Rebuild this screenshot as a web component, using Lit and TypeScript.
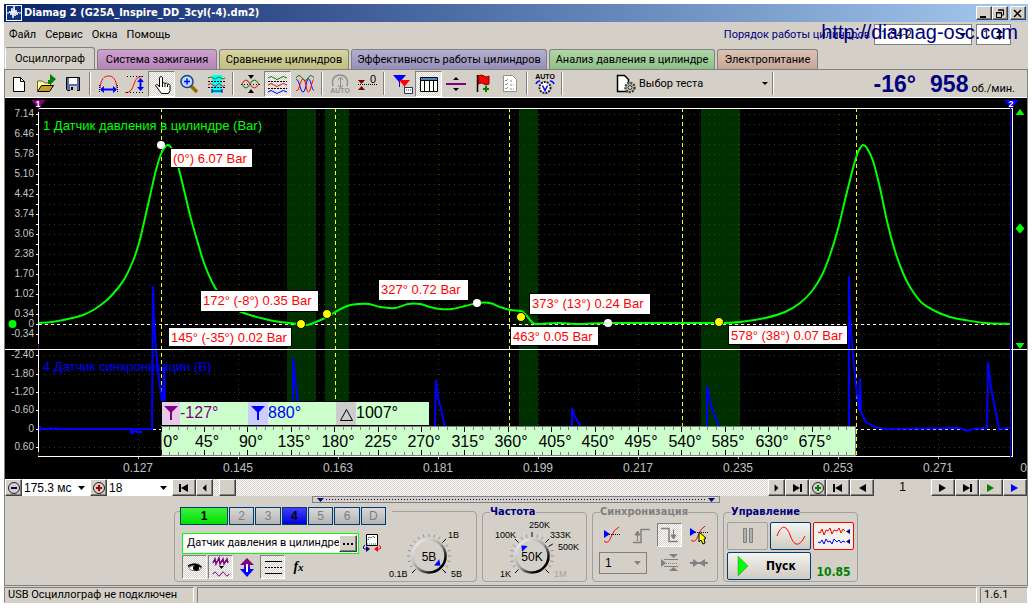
import { LitElement, html, svg, css } from "lit";
import { customElement, property } from "lit/decorators.js";
import { classMap } from "lit/directives/class-map.js";

type Pt = [number, number];

const linePath = (pts: Pt[]) => "M" + pts.map((p) => p.join(",")).join("L");

const smoothPath = (pts: Pt[]) => {
  let d = `M${pts[0][0]},${pts[0][1]}`;
  for (let i = 0; i < pts.length - 1; i++) {
    const a = pts[Math.max(0, i - 1)], b = pts[i], c = pts[i + 1], e = pts[Math.min(pts.length - 1, i + 2)];
    d += `C${b[0] + (c[0] - a[0]) / 6},${b[1] + (c[1] - a[1]) / 6} ${c[0] - (e[0] - b[0]) / 6},${c[1] - (e[1] - b[1]) / 6} ${c[0]},${c[1]}`;
  }
  return d;
};

const range = (n: number) => Array.from({ length: n }, (_, i) => i);

const PRESSURE: Pt[] = [
  [39, 323], [52, 322], [68, 319], [83, 315], [95, 309], [107, 300], [118, 288], [125, 278], [133, 261], [139, 243],
  [145, 218], [150, 196], [156, 170], [161, 154], [165, 147], [168, 145], [172, 149], [178, 166], [184, 190],
  [190, 215], [197, 240], [204, 263], [212, 282], [218, 292], [228, 304], [237, 310], [250, 315], [265, 319],
  [280, 322], [300, 324], [307, 325], [316, 322], [327, 317], [337, 311], [347, 306], [358, 304], [369, 304],
  [380, 307], [395, 308], [408, 304], [420, 304], [430, 307], [440, 309], [452, 309], [465, 306], [478, 303],
  [490, 303], [500, 307], [510, 310], [521, 311], [526, 315], [533, 323], [540, 324], [558, 323], [580, 324],
  [608, 323], [660, 323], [719, 323], [740, 322], [765, 318], [785, 312], [800, 303], [812, 291], [822, 275],
  [830, 255], [838, 229], [845, 200], [849, 184], [853, 168], [858, 152], [861, 147], [863, 145], [867, 148],
  [873, 161], [880, 188], [887, 221], [895, 251], [903, 273], [910, 287], [921, 302], [935, 311], [950, 317],
  [965, 320], [985, 323], [1011, 324],
];

const SYNC: Pt[][] = [
  [[39, 429], [152, 429], [153, 286], [154, 318], [156, 350], [158, 372], [162, 401]],
  [[163, 401], [164, 367], [165, 401]],
  [[293, 401], [293, 358], [295, 380], [298, 401]],
  [[435, 427], [436, 380], [438, 398], [441, 409], [443, 418], [445, 427]],
  [[572, 427], [572, 408], [575, 417], [581, 427]],
  [[707, 427], [707, 386], [711, 406], [715, 417], [719, 427]],
  [[849, 427], [849, 276], [850, 318], [853, 355], [856, 386], [859, 410], [860, 378], [861, 412], [866, 422],
    [875, 427], [885, 429], [960, 428], [967, 431], [973, 429], [987, 428], [988, 362], [991, 388], [995, 408],
    [999, 429], [1010, 428]],
];

const CALLOUTS = [
  { x: 171, y: 149, w: 81, h: 18, text: "(0°) 6.07 Bar" },
  { x: 201, y: 291, w: 117, h: 20, text: "172° (-8°) 0.35 Bar" },
  { x: 169, y: 328, w: 122, h: 18, text: "145° (-35°) 0.02 Bar" },
  { x: 379, y: 280, w: 89, h: 20, text: "327° 0.72 Bar" },
  { x: 530, y: 294, w: 120, h: 20, text: "373° (13°) 0.24 Bar" },
  { x: 511, y: 327, w: 87, h: 18, text: "463° 0.05 Bar" },
  { x: 729, y: 326, w: 118, h: 18, text: "578° (38°) 0.07 Bar" },
];

@customElement("scope-chart")
class ScopeChart extends LitElement {
  static styles = css`
    :host { display: block; background: #000; }
    svg { display: block; width: 100%; height: auto; font-family: "Liberation Sans", Arial, sans-serif; }
    .crisp { shape-rendering: crispEdges; }
    .ylab { font-size: 10px; fill: #c8c8c8; text-anchor: end; }
    .xlab { font-size: 12px; fill: #c0c0c0; text-anchor: middle; }
    .xlab.last { text-anchor: end; }
    .name { font-size: 13px; }
    .callout { font-size: 13px; fill: #f00; }
    .deg { font-size: 16px; }
    .mid { text-anchor: middle; }
    .flag { font-size: 9px; font-weight: bold; fill: #fff; text-anchor: middle; }
    .grid { stroke: #3c3c08; stroke-width: 1; fill: none; }
  `;

  render() {
    const rows = [...range(23).map((i) => 114 + i * 10), 355, 374, 392, 410, 447];
    const upper = ["7.14", "6.46", "5.78", "5.10", "4.42", "3.74", "3.06", "2.38", "1.70", "1.02", "0.34"];
    const yLabels: [number, string][] = [
      ...upper.map((t, i): [number, string] => [114 + i * 20, t]),
      [324, "0"], [334, "-0.34"], [355, "-2.40"], [374, "-1.80"], [392, "-1.20"], [410, "-0.60"], [429, "0"], [447, "0.60"],
    ];
    const xLabels = ["0.127", "0.145", "0.163", "0.181", "0.199", "0.217", "0.235", "0.253", "0.271"];
    const step = 43.4;
    return html`<svg viewBox="5 98 1022 381" role="img" aria-label="Осциллограмма">
      <g class="crisp">
        ${[[287, 29, 401], [325, 24, 401], [519, 19, 427], [701, 39, 427]].map(
          ([x, w, b]) => svg`<rect x=${x} y="109" width=${w} height=${b - 109} fill="#003000"/>`)}
        <g class="grid">
          ${rows.map((y) => svg`<path d="M44 ${y + 0.5}H1010" stroke-dasharray="1 4"/>`)}
          ${range(9).map((i) => svg`<path d="M${138.5 + i * 100} 114V456" stroke-dasharray="1 4"/>`)}
        </g>
        <path d="M39 324.5H1010M39 429.5H1010" stroke="#fff" stroke-dasharray="3 3"/>
        ${[161, 335, 509, 682, 856].map(
          (x) => svg`<path d="M${x + 0.5} 108V456" stroke="#ff0" stroke-dasharray="4 3"/>`)}
      </g>
      <text class="name" x="43" y="130" fill="#0f0">1 Датчик давления в цилиндре (Bar)</text>
      <text class="name" x="43" y="371" fill="#00f">4 Датчик синхронизации (В)</text>
      ${SYNC.map((s) => svg`<path d=${linePath(s)} fill="none" stroke="#00f" stroke-width="2"/>`)}
      <path d="M40 426v5M51 427v3M56 427v3M131 429v4h2v-2h3v1h6" fill="none" stroke="#00f" stroke-width="2"/>
      <path d=${smoothPath(PRESSURE)} fill="none" stroke="#0f0" stroke-width="2"/>
      <g class="crisp">
        <path d="M38 108.5H1012M5 349.5H1027M38 456.5H1012M38.5 108V457M1012.5 108V457" stroke="#fff"/>
        <path d="M1010.5 105V457" stroke="#00f"/>
        <path d="M38.5 106V112M38.5 344V349M38.5 452V456" stroke="#800080"/>
        ${range(23).map((i) => svg`<path d="M36 ${114.5 + i * 10}h2" stroke="#fff"/>`)}
        ${[355, 374, 392, 410, 429, 447].map((y) => svg`<path d="M36 ${y + 0.5}h2" stroke="#fff"/>`)}
        ${range(9).map((i) => svg`<path d="M${138.5 + i * 100} 457v2" stroke="#c0c0c0"/>`)}
      </g>
      ${yLabels.map(([y, t]) => svg`<text class="ylab" x="34" y=${y + 3}>${t}</text>`)}
      ${xLabels.map((t, i) => svg`<text class="xlab" x=${138 + i * 100} y="472">${t}</text>`)}
      <text class="xlab last" x="1027" y="472">0</text>
      <path d="M31 100H46L38.500 108Z" fill="#800080"/>
      <path d="M1004 100H1019L1011.500 108Z" fill="#00f"/>
      <text class="flag" x="38" y="107">1</text>
      <text class="flag" x="1011" y="107">2</text>
      <path d="M1015.500 115h9l-4.500-6zM1020 223.500l4.500 5-4.500 5-4.500-5zM1015.500 343h9l-4.500 6z" fill="#0f0"/>
      ${CALLOUTS.map((c) => svg`<rect class="crisp" x=${c.x - 1} y=${c.y - 1} width=${c.w + 2} height=${c.h + 2}/>
        <rect class="crisp" x=${c.x} y=${c.y} width=${c.w} height=${c.h} fill="#fff"/>
        <text class="callout" x=${c.x + 2} y=${c.y + 14}>${c.text}</text>`)}
      ${([[161, 145], [477, 303], [608, 323]] as Pt[]).map(([x, y]) => svg`<circle cx=${x} cy=${y} r="4" fill="#fff"/>`)}
      ${([[301, 324], [327, 314], [521, 317], [719, 322]] as Pt[]).map(
        ([x, y]) => svg`<circle cx=${x} cy=${y} r="4.500" fill="#ff0" stroke="#000"/>`)}
      <circle cx="12.500" cy="324" r="4" fill="#0f0"/>
      <g class="crisp">
        <rect x="161" y="401" width="269" height="25"/>
        <rect x="162" y="402" width="267" height="23" fill="#cfc"/>
        <rect x="162" y="402" width="18" height="23" fill="#e6cce6"/>
        <rect x="248" y="402" width="20" height="23" fill="#ccf"/>
        <rect x="336" y="402" width="20" height="23" fill="#ccc"/>
        <rect x="161.500" y="426.500" width="694" height="29" fill="#cfc" stroke="#808080"/>
        ${range(80).map((i) => {
          const x = Math.floor(161 + (i * step) / 5) + 0.5;
          const major = i % 5 === 0;
          return svg`<path d=${major ? `M${x} 427v5M${x} 450v5` : `M${x} 427v3M${x} 452v3`} stroke=${major ? "#000" : "#808080"}/>`;
        })}
      </g>
      <path d="M164 406h14l-6 6v8h-2v-8z" fill="#800080"/>
      <path d="M251 406h14l-6 6v8h-2v-8z" fill="#00f"/>
      <path d="M346.500 409.500l6 11h-12z" fill="none" stroke="#000"/>
      <text class="deg" x="180" y="418" fill="#800080">-127°</text>
      <text class="deg" x="268" y="418" fill="#00f">880°</text>
      <text class="deg" x="356" y="418">1007°</text>
      ${range(16).map((i) => svg`<text class="deg mid" x=${i ? Math.round(164 + i * step) : 171} y="447">${i * 45}°</text>`)}
    </svg>`;
  }
}

const ICONS: Record<string, unknown> = {
  new: svg`<path d="M6.500 5.500h7l4 4v10h-11z" fill="#fff" stroke="#000"/><path d="M13.500 5.500v4h4" fill="none" stroke="#000"/>`,
  open: svg`<path d="M3.500 19v-10h5l2 2h6v3" fill="#ffffc0" stroke="#806000"/><path d="M3.500 19.500l4-6h12l-4 6z" fill="#c8a020" stroke="#000"/><path d="M14 12V8h2V2l6 5-5 5" fill="#008000"/>`,
  save: svg`<path d="M5.500 5.500h13v13h-12l-1-1z" fill="#5a6ea8" stroke="#000"/><path d="M8 6h8v6H8z" fill="#fff"/><path d="M9 14h7v5H9z" fill="#c8c8c8"/><path d="M10 15h2v3h-2z" fill="#000"/>`,
  period: svg`<path d="M4 16C5 7 8 4 12.500 4s7.500 3 8.500 12" fill="none" stroke="#f00"/><path d="M3.500 13v8M21.500 13v8" stroke="#000" stroke-dasharray="1 1"/><path d="M5 17.500h15" stroke="#00f" stroke-width="2"/><path d="M8 14v7l-4-3.500zM17 14v7l4-3.500z" fill="#00f"/>`,
  ampl: svg`<path d="M2 20.500C8 21 9 17 11 12S14 4.500 20 4.500" fill="none" stroke="#f00"/><path d="M4 4.500h16M4 20.500h16" stroke="#000" stroke-dasharray="1 2"/><path d="M17.500 8v9" stroke="#00f" stroke-width="2"/><path d="M14 10h7l-3.500-4zM14 15h7l-3.500 4z" fill="#00f"/>`,
  hand: svg`<path d="M9.500 15V5.500q1.500-2 3 0V11q1.500-1 2.500.500 1.500-1 2.500.500 2-.500 2.500 1.500v5l-1.500 3h-7l-6-8q1-2 3 0z" fill="#fff" stroke="#000"/><path d="M15 12v3M17.500 12.500V15M12.500 11v4" stroke="#000"/>`,
  zoom: svg`<path d="M14 14l6 6" stroke="#907000" stroke-width="3.500"/><circle cx="10" cy="9.500" r="6" fill="#b8dcff" stroke="#204080" stroke-width="1.500"/><path d="M10 6.500v6M7 9.500h6" stroke="#00f" stroke-width="1.500"/>`,
  area: svg`<path d="M8 3h10v18H8z" fill="#0ff"/><path d="M4 6q3-2 5 0t4 0 4 0 4 0" fill="none" stroke="#008000"/><path d="M4 9.500h18M4 15.500h18" stroke="#000" stroke-dasharray="2 1"/><path d="M4 13q3-3 5 0t4 0 4 0 4 0" fill="none" stroke="#f00"/><path d="M8 19h10M8 17v4M18 17v4" stroke="#000080"/>`,
  merge: svg`<path d="M3 12q4-8 8 0t9 0" fill="none" stroke="#f00"/><path d="M3 12q4 8 8 0t9 0" fill="none" stroke="#008000"/><path d="M2 12.500h20" stroke="#000" stroke-dasharray="1 2"/><path d="M9 3h6l-3 4zM9 21h6l-3-4z"/>`,
  waves: svg`<path d="M2 6q3-3 6 0t6 0 7 0" fill="none" stroke="#008000"/><path d="M2 13q3-3 6 0t6 0 7 0" fill="none" stroke="#f00"/><path d="M2 20q3-3 6 0t6 0 7 0" fill="none" stroke="#00f"/><path d="M2 9.500h19M2 16.500h19" stroke="#000" stroke-dasharray="2 1"/>`,
  over: svg`<path d="M3 6q3-5 6 0t6 0 6 0" fill="none" stroke="#008000"/><path d="M3 8c3-3 4 12 7 12s3-13 5.500-13S19 20 21 18" fill="none" stroke="#00f"/><path d="M3 18c3 4 4-11 7-11s3 13 5.500 13S19 6 21 8" fill="none" stroke="#f00"/>`,
  auto: svg`<path d="M5 14C3 7 7 3 12 3s9 4 7 11" fill="none" stroke="#909090" stroke-width="1.500"/><path d="M12.500 6v9M10 8l2.500-3L15 8M10 13l2.500 3 2.500-3" fill="none" stroke="#909090"/><text x="12" y="21" font-size="7" font-weight="bold" text-anchor="middle" fill="#909090">AUTO</text>`,
  zero: svg`<path d="M3 8h7l-3.500 4zM3 18h7l-3.500-4z" fill="#800000"/><path d="M3 12.500h19" stroke="#000" stroke-dasharray="1 1"/><text x="15" y="11" font-size="11">0</text>`,
  markers: svg`<path d="M3 3h13l-6 7v5H9v-5z" fill="#00f"/><path d="M9 8h11l-5 6v4h-1v-4z" fill="#f00"/><path d="M14.500 15.500h8v6h-8z" fill="#fff" stroke="#303060"/><path d="M16 18h5" stroke="#303060" stroke-dasharray="1 1"/>`,
  table: svg`<path d="M3.500 5.500h17v14h-17z" fill="#fff" stroke="#000"/><path d="M4 6h16v2H4z" fill="#5080c0"/><path d="M7.500 8v11M12.500 8v11M16.500 8v11M3 8.500h18" stroke="#000"/>`,
  divide: svg`<path d="M2 12h20" stroke="#800080" stroke-width="2"/><path d="M9 8h6l-3-3zM9 16h6l-3 3z"/>`,
  flag: svg`<path d="M7 4q4-2 6 0t5 0v8q-3 2-5 0t-6 0z" fill="#f00" stroke="#800000"/><path d="M6.500 3v17" stroke="#000" stroke-width="1.500"/><path d="M15 14v6M12 17h6" stroke="#008000" stroke-width="2"/>`,
  list: svg`<path d="M5.500 3.500h9l4 4v12h-13z" fill="#fff" stroke="#909090"/><path d="M7 8l1 1 2-2M7 12l1 1 2-2M7 16l1 1 2-2" fill="none" stroke="#909090"/><path d="M12 9h3M12 13h4M12 17h4" stroke="#909090" stroke-dasharray="2 1"/>`,
  autov: svg`<text x="12" y="7" font-size="7" font-weight="bold" text-anchor="middle">AUTO</text><circle cx="12" cy="15.500" r="5.500" fill="#fff" stroke="#202020" stroke-width="2" stroke-dasharray="2 1"/><path d="M9.500 13.500l2.500 5 2.500-5" fill="none" stroke="#00f" stroke-width="1.500"/><path d="M7 9q-3 0-4 3M17 9q3 0 4 3" fill="none" stroke="#00f" stroke-width="1.500"/>`,
  test: svg`<path d="M3.500 3.500h7l4 4v12h-11z" fill="#fff" stroke="#000" stroke-width="1.500"/><circle cx="16" cy="15.500" r="4.500" fill="#d4d0c8" stroke="#404840" stroke-width="2.500" stroke-dasharray="2 1"/><circle cx="16" cy="15.500" r="2" fill="#d4d0c8" stroke="#303830"/>`,
  eye: svg`<path d="M5 11q7-6 14 0v2l-3 3H9q-4-2-4-5z" fill="#807c74"/><path d="M6 13q6-4 12 0-6 5-12 0z" fill="#fff"/><circle cx="13" cy="13" r="3"/><path d="M5 11q7-4 13 1" fill="none" stroke="#000" stroke-width="1.500"/>`,
  squeeze: svg`<path d="M4 8l2-4 1 5 3-6 1 6 3-5 1 5 3-5 1 4" fill="none" stroke="#800080" stroke-width="1.500"/><path d="M10 11h5l-2.500 3z"/><path d="M4 19q2-4 4 0t4 0 4 0 4 0" fill="none" stroke="#800080"/>`,
  updown: svg`<path d="M12 3l7 7h-4v3H9v-3H5z" fill="#800080"/><path d="M12 22l7-8h-4v-2H9v2H5z" fill="#00f"/><path d="M11 9h2v8h-2z" fill="#fff"/>`,
  lines: svg`<path d="M4 6.500h17M4 18.500h17" stroke="#000"/><path d="M4 12.500h17" stroke="#000" stroke-dasharray="2 1"/>`,
  swap: svg`<path d="M6.500 3.500h11v11h-11z" fill="#fff" stroke="#000"/><path d="M7 13h10" stroke="#008000" stroke-dasharray="1 1"/><path d="M8 9l1-3 2 1 2-2 2 2" fill="none" stroke="#000" stroke-dasharray="1 1"/><path d="M5 14q-3 2-1 4h3" fill="none" stroke="#000080"/><path d="M6 15l4 3-4 3z" fill="#000080"/><path d="M19 14q3 2 1 4h-3" fill="none" stroke="#f00"/><path d="M18 15l-4 3 4 3z" fill="#f00"/>`,
  trig: svg`<path d="M4 18q4 4 7-4t8-10" fill="none" stroke="#f00"/><path d="M4 7l6 4-6 4z" fill="#00f"/><path d="M9 11.500h12" stroke="#000" stroke-dasharray="1 1"/>`,
  rise: svg`<path d="M4 19.500h8V6.500h9" fill="none" stroke="#808080" stroke-width="1.500"/><path d="M8.500 18V9M6 12h5l-2.500-4z" fill="#808080" stroke="#808080"/>`,
  fall: svg`<path d="M3 5.500h8v13h9" fill="none" stroke="#808080" stroke-width="1.500"/><path d="M15.500 6v8M13 12h5l-2.500 4z" fill="#808080" stroke="#808080"/>`,
  trigset: svg`<path d="M4 17q4 4 7-4t7-10" fill="none" stroke="#f00"/><path d="M3 5l6 4-6 4z" fill="#00f"/><path d="M8 9.500h13" stroke="#000" stroke-dasharray="1 1"/><path d="M12 9l7 6-2 1 1 4-2 1-2-4-2 2z" fill="#ff0" stroke="#000"/>`,
  level: svg`<path d="M3 8l5 4-5 4zM11 3h9l-4.500 4zM11 20h9l-4.500-4z" fill="#808080"/><path d="M6 8.500h14M6 15.500h14" stroke="#808080"/><path d="M8 12.500h12" stroke="#808080" stroke-dasharray="1 1"/>`,
  center: svg`<path d="M3 12h18" stroke="#808080" stroke-width="2"/><path d="M6 8l6 4-6 4zM18 8l-6 4 6 4z" fill="#808080"/>`,
};

const icon = (name: string) => html`<svg class="ico" viewBox="0 0 24 24" aria-hidden="true">${ICONS[name]}</svg>`;

/* Playback glyphs drawn on a 16 by 10 field */
const arrow = (dir: "l" | "r", bar: boolean, color: string, small = false) => html`<svg class="arr" viewBox="0 0 16 10" aria-hidden="true">
  <path fill=${color} d=${small
    ? (dir === "l" ? "M10 1v8l-4-4z" : "M6 1v8l4-4z")
    : (dir === "l" ? "M12 1v8l-7-4z" : "M4 1v8l7-4z")}/>
  ${bar ? svg`<path fill=${color} d=${dir === "l" ? "M3 1h2v8h-2z" : "M11 1h2v8h-2z"}/>` : ""}
</svg>`;

@customElement("dial-knob")
class DialKnob extends LitElement {
  @property() value = "";
  @property({ attribute: false }) labels: [number, number, string, boolean?][] = [];
  @property({ attribute: false }) marks: number[] = [];
  @property({ type: Number }) pointer = 0;
  @property({ type: Number }) cx = 46;

  static styles = css`
    :host { display: block; }
    svg { display: block; font-family: "Liberation Sans", Arial, sans-serif; font-size: 9px; }
    .val { font-size: 12px; text-anchor: middle; }
    .off { fill: #a0a0a0; }
  `;

  render() {
    const cx = this.cx, cy = 38;
    const at = (deg: number, r: number) => {
      const a = ((deg - 90) * Math.PI) / 180;
      return `${(cx + r * Math.cos(a)).toFixed(1)} ${(cy + r * Math.sin(a)).toFixed(1)}`;
    };
    return html`<svg width="102" height="63" role="img" aria-label=${this.value}>
      <defs><linearGradient id="rim" x1="0" y1="0" x2="1" y2="1">
        <stop offset="0" stop-color="#fff"/><stop offset=".5" stop-color="#a0a0a0"/><stop offset=".8" stop-color="#000"/>
      </linearGradient></defs>
      ${range(19).map((i) => {
        const deg = -135 + i * 15;
        const on = this.marks.includes(deg);
        return svg`<path d="M${at(deg, 19)}L${at(deg, on ? 24 : 22)}" stroke=${on ? "#000" : "#909090"}/>`;
      })}
      <circle cx=${cx} cy=${cy} r="16.500" fill="#d4d0c8" stroke="url(#rim)" stroke-width="2.500"/>
      <path d="M0 -15L4 -10H-4Z" fill="#00f" transform="translate(${cx} ${cy}) rotate(${this.pointer})"/>
      <text class="val" x=${cx} y="43">${this.value}</text>
      ${this.labels.map(([x, y, t, off]) => svg`<text class=${off ? "off" : ""} x=${x} y=${y}>${t}</text>`)}
    </svg>`;
  }
}

@customElement("app-root")
class AppRoot extends LitElement {
  static styles = css`
    :host { display: block; box-sizing: border-box; padding: 4px 4px 5px; background: #fff; color: #000;
      font: 11px/14px Roboto, Tahoma, sans-serif; }
    * { box-sizing: border-box; }
    button, input, select { font: inherit; color: inherit; margin: 0; padding: 0; border: 0; border-radius: 0; }
    .win { background: #d4d0c8; }
    .title { display: flex; align-items: center; height: 18px; padding: 0 2px; gap: 2px; color: #fff;
      font: bold 11px/14px "DejaVu Sans Condensed", Tahoma, sans-serif; background: linear-gradient(90deg, #0a246a, #a6caf0); }
    .title .cap { flex: 1; }
    .logo { width: 16px; height: 16px; display: block; }
    .wbtns { display: flex; }
    .wb, .raised { background: #d4d0c8; border: 1px solid; border-color: #fff #404040 #404040 #fff;
      box-shadow: inset -1px -1px #808080; display: flex; align-items: center; justify-content: center; }
    .wb { width: 16px; height: 14px; }
    .wb.close { margin-left: 2px; }
    .wb svg { display: block; }
    .menu { display: flex; align-items: center; height: 25px; padding: 0 17px 0 5px; position: relative; }
    .menu nav { display: flex; gap: 9px; flex: 1; }
    .menu a { color: #000; text-decoration: none; }
    .order { display: flex; align-items: center; gap: 4px; color: #000080; }
    .order select, .order input { height: 21px; border: 1px solid #808080; background-color: #fff; color: #000; }
    .order select { width: 98px; padding-left: 6px; }
    .order input { width: 35px; padding-left: 6px;
      background: #fff url("data:image/svg+xml,%3Csvg xmlns='http://www.w3.org/2000/svg' width='7' height='11'%3E%3Cpath d='M0 4h7L3.500 0zM0 7h7L3.500 11z'/%3E%3C/svg%3E") no-repeat right 7px center; }
    .menu .site { position: absolute; right: 10px; top: 0; font: 20px/20px "Liberation Sans", Arial, sans-serif; color: #000080;
      white-space: nowrap; }
    select { appearance: none; background: #fff url("data:image/svg+xml,%3Csvg xmlns='http://www.w3.org/2000/svg' width='7' height='4'%3E%3Cpath d='M0 0h7L3.500 4z'/%3E%3C/svg%3E") no-repeat right 5px center; }
    .tabs { display: grid; grid-template-columns: 90px 120px 130px 196px 166px 101px; column-gap: 2px; align-items: end;
      height: 22px; padding-left: 1px; }
    .tab { height: 20px; border: 1px solid #808080; border-bottom: 0; border-radius: 3px 3px 0 0; white-space: nowrap; }
    .tab.on { height: 22px; background: #d4d0c8; border-color: #808080 #808080 #808080 #fff; }
    .tab.c1 { background: linear-gradient(#cf9fd0, #b585b8); }
    .tab.c2 { background: linear-gradient(#d6d4a0, #c0be80); }
    .tab.c3 { background: linear-gradient(#b4aed0, #958fb8); }
    .tab.c4 { background: linear-gradient(#b0d6a6, #8fc088); }
    .tab.c5 { background: linear-gradient(#dcc2b4, #c6a696); }
    .page { border: 1px solid #808080; border-top: 0; }
    .tools { display: flex; align-items: center; height: 28px; border-top: 1px solid #808080; }
    .tb { width: 27px; height: 26px; display: flex; align-items: center; justify-content: center; background: none; flex: none; }
    .ico { width: 24px; height: 24px; display: block; flex: none; font-family: "Liberation Sans", Arial, sans-serif; }
    .down { border: 1px solid; border-color: #808080 #fff #fff #808080;
      background: repeating-conic-gradient(#fff 0 25%, #d4d0c8 0 50%) 0 0 / 2px 2px; }
    .sep { flex: none; width: 2px; height: 23px; margin: 0 3px; background: #808080; border-right: 1px solid #fff; }
    .test { display: flex; align-items: center; gap: 1px; width: 155px; height: 26px; margin-left: 48px; background: none;
      text-align: left; }
    .test span { flex: 1; }
    .rpm { flex: 1; display: flex; align-items: baseline; justify-content: flex-end; padding-right: 12px; color: #000;
      white-space: nowrap; }
    .rpm b { font: bold 23px/26px "Liberation Sans", Arial, sans-serif; color: #000080; margin-right: 14px; }
    .rpm b.n { margin-right: 3px; }
    scope-chart { border-top: 1px solid #fff; }
    .navbar { display: flex; height: 17px; font: 12px/16px "Liberation Sans", Arial, sans-serif; }
    .navbar .raised { flex: none; width: 24px; height: 17px; }
    .navbar .sm { width: 17px; }
    .navbar select { flex: none; width: 68px; padding-left: 2px; }
    .navbar select.w2 { width: 65px; }
    .track { flex: 1; padding-left: 6px;
      background: repeating-conic-gradient(#fff 0 25%, #d4d0c8 0 50%) 0 0 / 2px 2px; }
    .pageno { width: 57px; text-align: center; }
    .arr { width: 16px; height: 10px; display: block; }
    .split { display: block; width: 408px; height: 7px; margin: 0 auto; border: 1px solid #808080; }
    .split svg { display: block; width: 100%; height: 5px; }
    .groups { display: flex; justify-content: center; gap: 5px; height: 82px; padding-top: 3px; }
    fieldset, .chan { margin: 0; border: 1px solid #a0a0a0; border-radius: 4px; padding: 0; min-width: 0; height: 76px; }
    legend { font: bold 11px/12px "DejaVu Sans Condensed", Tahoma, sans-serif; color: #000080; padding: 0; margin-left: 7px; }
    .dis legend { color: #808080; }
    .chan { width: 303px; height: 71px; margin-top: 5px; display: flex; }
    .chan .left { width: 212px; display: flex; flex-direction: column; padding-left: 5px; }
    .chrow { display: flex; gap: 1px; margin-top: -5px; margin-right: -5px; padding-right: 6px; background: #d4d0c8; }
    .ch { flex: 1; height: 18px; border: 1px solid #003c74; background: linear-gradient(#d8d8d8, #b4b4b4); color: #808080;
      font: 12px/14px "Liberation Sans", Arial, sans-serif; }
    .ch.a { flex: 0 0 48px; background: linear-gradient(#40f040, #00e000); color: #000; font-weight: bold; }
    .ch.b { background: linear-gradient(#4040ff, #0000d8); color: #000; font-weight: bold; }
    .sensor { display: flex; align-items: center; gap: 1px; margin-top: 6px; padding-left: 2px; }
    .box { display: flex; width: 177px; height: 21px; border: 1px solid #0f0; background: #fff; padding: 1px; }
    .box input { flex: 1; min-width: 0; padding-left: 3px; background: none; }
    .box .raised { width: 18px; }
    .row { display: flex; gap: 1px; padding-left: 2px; align-items: center; }
    .row .tb, .sync .tb { width: 25px; height: 24px; }
    .fx { font: italic bold 14px/16px "Liberation Serif", serif; }
    .fx small { font-size: 11px; }
    .knob1 { padding-top: 6px; flex: 1; overflow: hidden; }
    .freq { width: 105px; }
    .dis { width: 126px; }
    .ctl { width: 135px; }
    .sync { display: grid; grid-template-columns: repeat(4, 25px); column-gap: 4px; row-gap: 4px; padding: 5px 6px 0; align-items: center; }
    .sync select { grid-column: span 2; width: 48px; height: 22px; border: 1px solid #808080; color: #000;
      font: 12px/16px "Liberation Sans", Arial, sans-serif; padding-left: 5px;
      background: #d4d0c8 url("data:image/svg+xml,%3Csvg xmlns='http://www.w3.org/2000/svg' width='7' height='4'%3E%3Cpath d='M0 0h7L3.500 4z' fill='gray'/%3E%3C/svg%3E") no-repeat right 5px center; }
    .pad { display: grid; grid-template-columns: repeat(3, 41px); gap: 2px; padding: 4px 3px 0; }
    .key { height: 28px; border: 1px solid #003c74; border-radius: 2px; background: linear-gradient(#f4f3ee, #cfcbc2);
      display: flex; align-items: center; justify-content: center; }
    .key svg { display: block; }
    .key.off { border-color: #a0a0a0; background: #d4d0c8; }
    .key.red { border-color: #f00; background: #f4f2ee; }
    .key.go { grid-column: span 2; font: bold 12px/16px "DejaVu Sans Condensed", Tahoma, sans-serif; gap: 28px;
      justify-content: flex-start; padding-left: 9px; }
    .key.go { gap: 18px; }
    .volt { align-self: end; font: bold 12px/16px "DejaVu Sans Condensed", sans-serif; color: #008000; text-align: center; }
    .status { display: grid; grid-template-columns: 190px 1fr 48px; gap: 3px; margin-top: 1px; height: 16px; }
    .status span { border: 1px solid; border-color: #808080 #fff #d4d0c8 #808080; padding-left: 3px; white-space: nowrap; }
  `;

  private tool(name: string, label: string, on = false) {
    return html`<button class=${classMap({ tb: true, down: on })} aria-label=${label}>${icon(name)}</button>`;
  }

  private nav(label: string, body: unknown, sm = false) {
    return html`<button class=${classMap({ raised: true, sm })} aria-label=${label}>${body}</button>`;
  }

  private round(sign: "-" | "+", color: string) {
    return html`<svg width="14" height="14" viewBox="0 0 14 14" aria-hidden="true">
      <circle cx="7" cy="7" r="5.500" fill="none" stroke="#202020"/>
      <path d=${sign === "-" ? "M4 7h6" : "M4 7h6M7 4v6"} stroke=${color} stroke-width="2"/></svg>`;
  }

  render() {
    const tabs = ["Осциллограф", "Система зажигания", "Сравнение цилиндров", "Эффективность работы цилиндров", "Анализ давления в цилиндре", "Электропитание"];
    return html`<div class="win">
      <header class="title">
        <svg class="logo" viewBox="0 0 16 16" aria-hidden="true"><path d="M0 0h16v16H0z" fill="#fff"/><path d="M1 1h14v14H1z" fill="#103080"/><path d="M1 8h2l1-2 1 4 1-7 1 10 1-12 1 10 1-6 1 5 1-3 1 1h2" fill="none" stroke="#fff"/></svg>
        <span class="cap">Diamag 2 (G25A_Inspire_DD_3cyl(-4).dm2)</span>
        <div class="wbtns">
          <button class="wb" aria-label="Свернуть"><svg width="10" height="9"><path d="M1 7h6v2H1z"/></svg></button>
          <button class="wb" aria-label="Восстановить"><svg width="10" height="9"><path d="M3.500 1h5v5h-2M1.500 3.500h5v5h-5zM3 1h6M1 4h6" fill="none" stroke="#000"/></svg></button>
          <button class="wb close" aria-label="Закрыть"><svg width="10" height="9"><path d="M1 1l7 7M8 1L1 8" stroke="#000" stroke-width="1.500"/></svg></button>
        </div>
      </header>
      <div class="menu">
        <nav>${["Файл", "Сервис", "Окна", "Помощь"].map((t) => html`<a href="#">${t}</a>`)}</nav>
        <div class="order">
          <label for="order">Порядок работы цилиндров</label>
          <select id="order"><option>1-34-2</option></select>
          <input aria-label="Цилиндр" value="1" />
        </div>
        <a class="site" href="#">http://diamag-osc.com</a>
      </div>
      <div class="tabs" role="tablist">
        ${tabs.map((t, i) => html`<button role="tab" aria-selected=${i === 0} class="tab ${i ? "c" + i : "on"}">${t}</button>`)}
      </div>
      <main class="page">
        <div class="tools">
          ${this.tool("new", "Новый")}${this.tool("open", "Открыть")}${this.tool("save", "Сохранить")}
          <i class="sep"></i>
          ${this.tool("period", "Период")}${this.tool("ampl", "Амплитуда")}${this.tool("hand", "Рука", true)}${this.tool("zoom", "Увеличить")}${this.tool("area", "Область")}
          <i class="sep"></i>
          ${this.tool("merge", "Совместить")}${this.tool("waves", "Разделить", true)}${this.tool("over", "Наложить")}
          <i class="sep"></i>
          ${this.tool("auto", "Авто")}${this.tool("zero", "Ноль")}
          <i class="sep"></i>
          ${this.tool("markers", "Маркеры")}${this.tool("table", "Таблица", true)}${this.tool("divide", "Разделитель")}${this.tool("flag", "Флаг")}${this.tool("list", "Список")}
          <i class="sep"></i>
          ${this.tool("autov", "Автонапряжение")}
          <i class="sep"></i>
          <button class="test">${icon("test")}<span>Выбор теста</span><svg width="7" height="4" aria-hidden="true"><path d="M0 0h6L3 3z"/></svg></button>
          <i class="sep"></i>
          <div class="rpm"><b>-16°</b><b class="n">958</b>об./мин.</div>
        </div>
        <scope-chart></scope-chart>
        <div class="navbar">
          ${this.nav("Уменьшить", this.round("-", "#000080"), true)}
          <select aria-label="Длительность"><option>175.3 мс</option></select>
          ${this.nav("Увеличить", this.round("+", "#a00000"), true)}
          <select class="w2" aria-label="Масштаб"><option>18</option></select>
          ${this.nav("В начало", arrow("l", true, "#000"))}
          ${this.nav("Назад", arrow("l", false, "#000", true), true)}
          <div class="track"><div class="raised sm"></div></div>
          ${this.nav("Вперёд", arrow("r", false, "#000", true), true)}
          ${this.nav("В конец", arrow("r", true, "#000"))}
          ${this.nav("Добавить", this.round("+", "#008000"), true)}
          ${this.nav("Первая", arrow("l", true, "#000"))}
          ${this.nav("Предыдущая", arrow("l", false, "#000"))}
          <span class="pageno">1</span>
          ${this.nav("Следующая", arrow("r", false, "#000"))}
          ${this.nav("Последняя", arrow("r", true, "#000"))}
          ${this.nav("Воспроизвести", arrow("r", false, "#008000"))}
          ${this.nav("Повтор", arrow("r", false, "#00f"))}
        </div>
        <div class="split"><svg viewBox="0 0 406 5" aria-hidden="true"><path d="M4 1h7L7.500 5zM395 1h7l-3.500 4z" fill="#000080"/><path d="M13 2.500h380" stroke="#000080" stroke-dasharray="1 2"/></svg></div>
        <div class="groups">
          <section class="chan" aria-label="Канал">
            <div class="left">
              <div class="chrow">
                ${["1", "2", "3", "4", "5", "6", "D"].map((t) => html`<button class=${classMap({ ch: true, a: t === "1", b: t === "4" })}>${t}</button>`)}
              </div>
              <div class="sensor">
                <div class="box"><input aria-label="Датчик" value="Датчик давления в цилиндре" /><button class="raised" aria-label="Выбрать"><svg width="10" height="3"><path d="M0 1h2v2H0zM4 1h2v2H4zM8 1h2v2H8z"/></svg></button></div>
                ${icon("swap")}
              </div>
              <div class="row">
                ${this.tool("eye", "Показать", true)}${this.tool("squeeze", "Фильтр", true)}${this.tool("updown", "Инверсия")}${this.tool("lines", "Линии", true)}
                <button class="tb fx" aria-label="Функция"><span>f<small>x</small></span></button>
              </div>
            </div>
            <dial-knob class="knob1" value="5В" .cx=${42} .pointer=${130} .marks=${[-135, 45, 135]}
              .labels=${[[61, 20, "1В"], [2, 59, "0.1В"], [64, 59, "5В"]]}></dial-knob>
          </section>
          <fieldset class="freq"><legend>Частота</legend>
            <dial-knob value="50K" .cx=${49} .pointer=${-45} .marks=${[-135, -45, 0, 45, 60, 135]}
              .labels=${[[12, 20, "100K"], [46, 10, "250K"], [67, 20, "333K"], [75, 32, "500K"], [17, 59, "1K"], [71, 59, "1M", true]]}></dial-knob>
          </fieldset>
          <fieldset class="dis"><legend>Синхронизация</legend>
            <div class="sync">
              ${this.tool("trig", "Уровень")}${this.tool("rise", "Фронт")}${this.tool("fall", "Спад", true)}${this.tool("trigset", "Выбор уровня")}
              <select aria-label="Канал синхронизации"><option>1</option></select>
              ${this.tool("level", "По уровню")}${this.tool("center", "По центру")}
            </div>
          </fieldset>
          <fieldset class="ctl"><legend>Управление</legend>
            <div class="pad">
              <button class="key off" aria-label="Пауза"><svg width="12" height="16"><path d="M1.500.500h3v14h-3zM7.500.500h3v14h-3z" fill="#b0b0b0" stroke="#808080"/></svg></button>
              <button class="key" aria-label="Синус"><svg width="30" height="20"><path d="M1 10C5-1 10-2 14 9s9 13 15 1" fill="none" stroke="#f00"/></svg></button>
              <button class="key red" aria-label="Два канала"><svg width="34" height="20"><path d="M1 6l2 1 2-4 2 6 2-5 2 1 2-3 2 6 2-4 3 1 2-3 2 5 2-4 2 2" fill="none" stroke="#f00"/><path d="M1 16l2 1 2-3 2 4 2-5 2 3 2-1 2 3 2-5 3 3 2-2 2 3 2-2 2 1" fill="none" stroke="#00f"/><path d="M33 3v5l-4-2.500zM33 13v5l-4-2.500z" fill="#000080"/></svg></button>
              <button class="key go"><svg width="11" height="20"><path d="M1 0l10 10L1 20z" fill="#0f0" stroke="#408040" stroke-width=".500"/></svg>Пуск</button>
              <span class="volt">10.85</span>
            </div>
          </fieldset>
        </div>
      </main>
      <footer class="status"><span>USB Осциллограф не подключен</span><span></span><span>1.6.1</span></footer>
    </div>`;
  }
}
